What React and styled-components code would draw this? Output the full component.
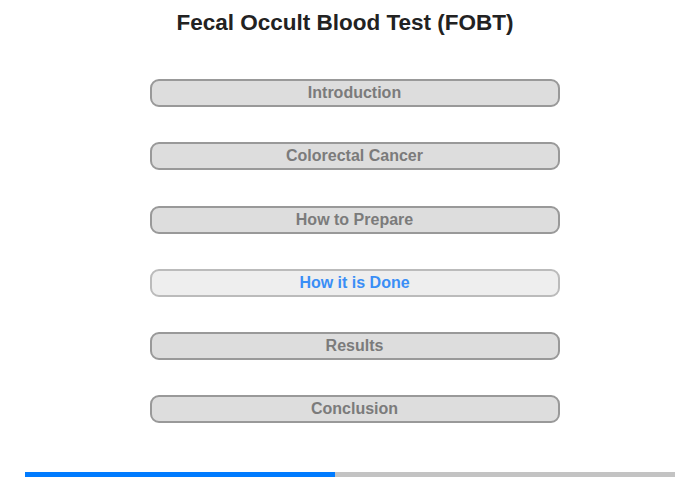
import React from 'react'
import styled, { createGlobalStyle } from 'styled-components'

const sections = [
  'Introduction',
  'Colorectal Cancer',
  'How to Prepare',
  'How it is Done',
  'Results',
  'Conclusion',
]

const current = 3

const App = () => {
  return (
    <Page>
      <GlobalStyle />
      <Title>Fecal Occult Blood Test (FOBT)</Title>

      <Menu>
        {sections.map((label, i) => (
          <MenuButton key={label} $active={i === current}>
            {label}
          </MenuButton>
        ))}
      </Menu>

      <Progress>
        <ProgressFill style={{ width: `${(310 / 650) * 100}%` }} />
      </Progress>
    </Page>
  )
}

export default App

const GlobalStyle = createGlobalStyle`
  body {
    margin: 0;
    background: #fff;
    font-family: "Liberation Sans", Arial, sans-serif;
  }
`

const Page = styled.div`
  width: 700px;
  height: 480px;
  display: flex;
  flex-direction: column;
  align-items: center;
  box-sizing: border-box;
  padding-top: 9px;
`

const Title = styled.h1`
  margin: 0 10px 0 0;
  font-size: 22.5px;
  font-weight: bold;
  color: #222;
  line-height: 28px;
`

const Menu = styled.div`
  display: flex;
  flex-direction: column;
  gap: 35.25px;
  margin: 42px 0 0 9px;
`

const MenuButton = styled.div`
  width: 410px;
  height: 28px;
  box-sizing: border-box;
  border: 2px solid ${(p) => (p.$active ? '#bbb' : '#999')};
  border-radius: 9px;
  background: ${(p) => (p.$active ? '#eee' : '#ddd')};
  color: ${(p) => (p.$active ? '#3a8ef6' : '#7b7b7b')};
  font-size: 16px;
  font-weight: bold;
  display: flex;
  align-items: center;
  justify-content: center;
  cursor: pointer;
`

const Progress = styled.div`
  width: 650px;
  height: 5px;
  background: #c3c3c3;
  margin-top: 49px;
  display: flex;
`

const ProgressFill = styled.div`
  height: 100%;
  background: #007bff;
`
